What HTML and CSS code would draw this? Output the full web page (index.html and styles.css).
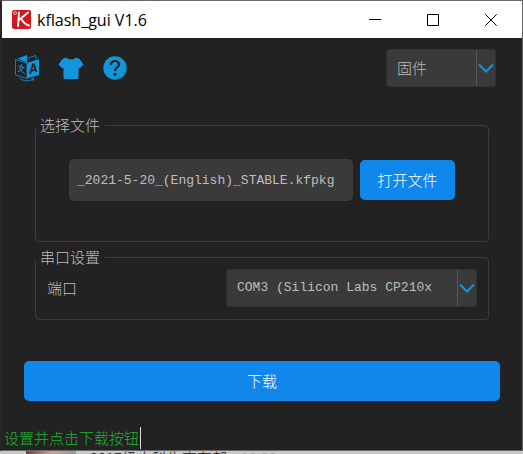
FILE: index.html
```html
<!DOCTYPE html>
<html lang="zh-CN">
<head>
<meta charset="utf-8">
<meta name="viewport" content="width=device-width, initial-scale=1">
<title>kflash_gui V1.6</title>
<link rel="stylesheet" href="styles.css">
</head>
<body>
<div class="window">
  <header class="titlebar">
    <svg class="logo" viewBox="0 0 19 19" aria-hidden="true">
      <rect width="19" height="19" rx="2" fill="#d5161f"/>
      <circle cx="3" cy="3" r="1.5" fill="none" stroke="#fff" stroke-width=".7"/>
      <path d="M7 2.5L6 16M16 2.5L7 10M9 8.500C11 12 13 14.500 17 15.500" fill="none" stroke="#fff" stroke-width="1.9" stroke-linecap="round"/>
    </svg>
    <h1 class="title">kflash_gui V1.6</h1>
    <div class="controls">
      <button class="control" type="button" aria-label="最小化"><svg viewBox="0 0 12 12"><path d="M0 5.500H12"/></svg></button>
      <button class="control" type="button" aria-label="最大化"><svg viewBox="0 0 12 12"><path d="M.5.5H11.500V11.500H.5Z"/></svg></button>
      <button class="control" type="button" aria-label="关闭"><svg viewBox="0 0 12 12"><path d="M.3.3L11.700 11.700M11.700.3L.3 11.700"/></svg></button>
    </div>
  </header>

  <main class="content">
    <div class="toolbar">
      <button class="tool" type="button" aria-label="语言">
        <svg viewBox="0 0 26 28">
          <path d="M1.500 5.500L13 9V24.500L1.500 21Z" fill="#222" stroke="#1296db" stroke-width=".8"/>
          <path d="M3.500 4.500L13 1V8.500Z" fill="#1296db"/>
          <path d="M13 4.500L22 1.500V5.500" fill="none" stroke="#1296db" stroke-width=".8"/>
          <path d="M13 9L25 5V21L13 24.500Z" fill="#1296db"/>
          <path d="M16 20L18.800 10.500H19.800L22.500 18M17 17L21.500 15.700" fill="none" stroke="#222" stroke-width="1.800"/>
          <path d="M7 10L7.800 12M4.300 12L10.500 13.800M8.800 13.800C8 16 6 17.500 3.800 17.500M5.500 13.500C6.500 16.500 8.500 18.500 10.700 19.500" fill="none" stroke="#1296db" stroke-width="1"/>
          <path d="M6 24.500C9 27.300 16 27.500 19.500 25M17.500 24.500L20 24.600L19 27" fill="none" stroke="#1296db" stroke-width=".8"/>
        </svg>
      </button>
      <button class="tool" type="button" aria-label="皮肤">
        <svg viewBox="0 0 26 28"><path d="M8 3.500C10 6 16 6 18 3.500L21.500 5L25.500 10.500L21.500 14.500L20.500 13.700V24Q20.500 25 19.500 25H6.500Q5.500 25 5.500 24V13.700L4.500 14.500L.5 10.500L4.500 5Z" fill="#1296db"/></svg>
      </button>
      <button class="tool" type="button" aria-label="帮助">
        <svg viewBox="0 0 26 28">
          <circle cx="13" cy="14" r="11.700" fill="#1296db"/>
          <path d="M9 10.800C9 5.800 17 5.800 17 10.500C17 13.300 13 13.300 13 17" fill="none" stroke="#222" stroke-width="2.200"/>
          <circle cx="13" cy="20.200" r="1.500" fill="#222"/>
        </svg>
      </button>
      <div class="picker picker-mode">
        <select class="select" aria-label="类型"><option>固件</option></select>
        <svg class="chevron" viewBox="0 0 16 10" aria-hidden="true"><path d="M1 1.500L8 8.500L15 1.500"/></svg>
      </div>
    </div>

    <fieldset class="group group-file">
      <legend>选择文件</legend>
      <div class="file-row">
        <input class="file-input" type="text" aria-label="文件路径" value="_2021-5-20_(English)_STABLE.kfpkg">
        <button class="button" type="button">打开文件</button>
      </div>
    </fieldset>

    <fieldset class="group group-port">
      <legend>串口设置</legend>
      <div class="port-row">
        <label for="port">端口</label>
        <div class="picker picker-port">
          <select class="select" id="port"><option>COM3 (Silicon Labs CP210x</option></select>
          <svg class="chevron" viewBox="0 0 16 10" aria-hidden="true"><path d="M1 1.500L8 8.500L15 1.500"/></svg>
        </div>
      </div>
    </fieldset>

    <button class="button download" type="button">下载</button>
  </main>

  <footer class="status"><span class="message">设置并点击下载按钮</span></footer>
</div>
<div class="behind">
  <span class="avatar"></span>
  <span class="chat">2017级本科生高有部</span>
  <span class="time">12:39</span>
</div>
</body>
</html>
```
FILE: styles.css
```css
* {
  box-sizing: border-box;
}

body {
  margin: 0;
  height: 100vh;
  display: flex;
  flex-direction: column;
  overflow: hidden;
  background: #c8c8c8;
  color: #bebebe;
  font: 15px/22px "Noto Sans CJK SC", sans-serif;
  font-weight: 300;
}

button,
input,
select {
  margin: 0;
  border: 0;
  font: inherit;
  color: inherit;
}

.window {
  flex: 1;
  display: flex;
  flex-direction: column;
  min-height: 0;
  border: 1px solid #666;
  border-left: 2px solid #2b2626;
  background: #222;
}

.titlebar {
  display: flex;
  align-items: center;
  height: 37px;
  flex: none;
  padding: 0 2px 0 10px;
  background: #fff;
  color: #000;
}

.logo {
  width: 19px;
  height: 19px;
}

.title {
  flex: 1;
  margin: 0 0 0 6px;
  font: 16px/20px "Open Sans", "Noto Sans", sans-serif;
}

.controls {
  display: flex;
}

.control {
  width: 58px;
  height: 37px;
  padding: 0;
  background: none;
}

.control svg {
  display: block;
  width: 12px;
  height: 12px;
  margin: auto;
  fill: none;
  stroke: #000;
}

.content {
  flex: 1;
  padding: 11px 22px 0;
}

.toolbar {
  display: flex;
  align-items: center;
  gap: 18px;
  height: 38px;
  margin: 0 4px 0 -10px;
}

.tool {
  width: 26px;
  height: 28px;
  padding: 0;
  background: none;
}

.tool svg {
  display: block;
  width: 26px;
  height: 28px;
}

.picker {
  display: grid;
  grid-template-columns: 1fr 19px;
  align-items: center;
  height: 38px;
  border: 1px solid #303030;
  border-radius: 3px;
  background: #3a3a3a;
}

.picker-mode {
  width: 110px;
  margin-left: auto;
}

.picker-port {
  width: 251px;
}

.select {
  grid-area: 1 / 1 / 2 / 3;
  width: 100%;
  height: 36px;
  padding: 0 28px 0 10px;
  appearance: none;
  background: none;
}

.chevron {
  grid-area: 1 / 2;
  width: 19px;
  height: 36px;
  padding: 0 1px;
  border-left: 1px solid #555;
  fill: none;
  stroke: #1296db;
  stroke-width: 2;
  pointer-events: none;
}

.group {
  min-width: 0;
  margin: 0 11px;
  padding: 0;
  border: 1px solid #3a3a3a;
  border-radius: 4px;
}

.group legend {
  padding: 0 5px 0 4px;
}

.group-file {
  height: 128px;
  margin-top: 27px;
}

.group-port {
  height: 74px;
  margin-top: 4px;
}

.file-row {
  display: flex;
  align-items: center;
  gap: 7px;
  padding: 23px 33px;
}

.file-input {
  flex: 1;
  min-width: 0;
  height: 42px;
  padding: 0 8px;
  border-radius: 5px;
  background: #3a3a3a;
}

.file-input,
.picker-port .select {
  font-family: "Liberation Mono", monospace;
  font-size: 13px;
}

.button {
  width: 95px;
  height: 40px;
  padding: 0;
  border-radius: 5px;
  background: #1088eb;
  color: #fff;
}

.port-row {
  display: flex;
  align-items: center;
  justify-content: space-between;
  padding: 1px 11px;
}

.download {
  display: block;
  width: 100%;
  margin-top: 41px;
}

.status {
  flex: none;
  height: 23px;
  color: #1eb42f;
}

.message {
  display: inline-block;
  padding: 0 1px 0 2px;
  border-right: 1px solid #ddd;
}

.behind {
  display: flex;
  flex: none;
  height: 3px;
  margin-left: 8px;
  overflow: hidden;
  color: #111;
  line-height: 14px;
}

.avatar {
  width: 50px;
  margin-left: 18px;
  background: linear-gradient(90deg, #7d3838, #c9a398, #999);
}

.chat {
  margin-left: 14px;
}

.time {
  margin-left: 14px;
  color: #999;
}
```
